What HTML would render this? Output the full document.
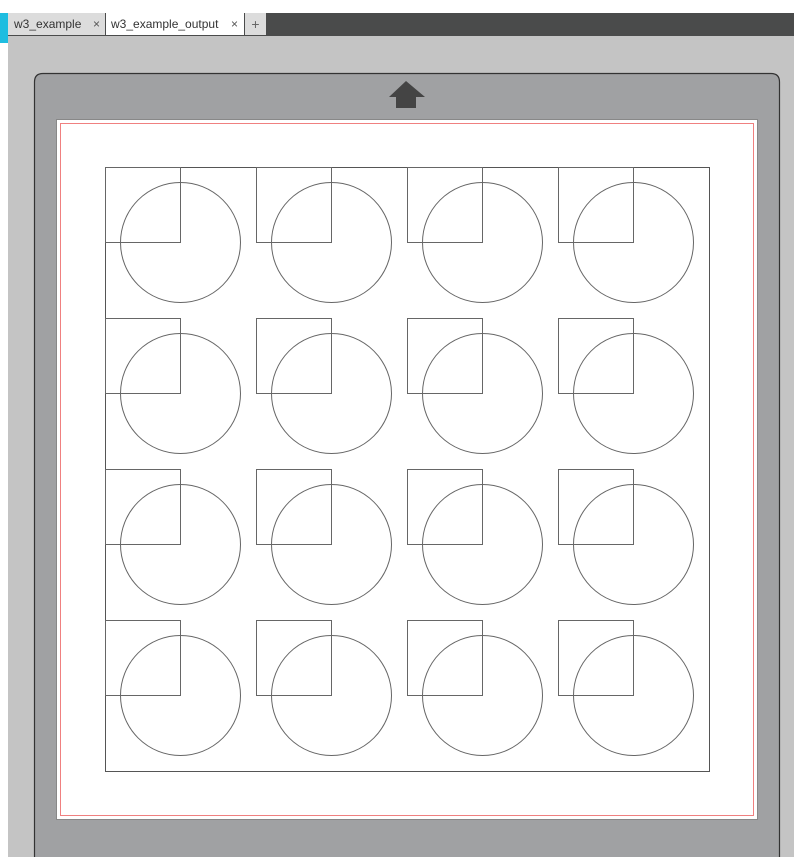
<!DOCTYPE html>
<html><head><style>
body{margin:0;width:794px;height:857px;overflow:hidden;background:#c4c4c4;font-family:"Liberation Sans",sans-serif;position:relative}
</style></head><body>
<div style="position:absolute;left:0;top:0;width:794px;height:13px;background:#fff"></div>
<div style="position:absolute;left:0;top:13px;width:794px;height:23px;background:#4a4b4b"></div>
<div style="position:absolute;left:0;top:13px;width:8px;height:30px;background:#1ebde0"></div>
<div style="position:absolute;left:0;top:43px;width:8px;height:814px;background:#fff"></div>
<div style="position:absolute;left:8px;top:13px;width:97px;height:22px;background:#dcdcdc;font-size:12px;color:#333;line-height:22px"><span style="margin-left:6px">w3_example</span><span style="position:absolute;left:85px;color:#555">×</span></div>
<div style="position:absolute;left:106px;top:13px;width:138px;height:22px;background:#fff;font-size:12px;color:#333;line-height:22px"><span style="margin-left:5px">w3_example_output</span><span style="position:absolute;left:125px;color:#555">×</span></div>
<div style="position:absolute;left:245px;top:13px;width:21px;height:22px;background:#dcdcdc;font-size:14px;color:#666;line-height:22px;text-align:center">+</div>
<svg style="position:absolute;left:0;top:0" width="794" height="857">
<path d="M34.5 857 V82 Q34.5 73.5 43 73.5 H771 Q779.5 73.5 779.5 82 V857" fill="#a0a1a3" stroke="#333" stroke-width="1.2"/>
<path d="M406 81 L425 97 L416 97 L416 108 L396 108 L396 97 L389 97 Z" fill="#444"/>
<rect x="56.5" y="119.5" width="701" height="700" fill="#fff" stroke="#888"/>
<rect x="60.5" y="123.5" width="693" height="692" fill="none" stroke="#f08080"/>
<rect x="105.5" y="167.5" width="604" height="604" fill="none" stroke="#555"/>
<g fill="none" stroke="#666" stroke-width="1">
<g id="c"><rect x="105.5" y="167.5" width="75" height="75"/><circle cx="180.5" cy="242.5" r="60"/></g>
<use href="#c" x="151"/><use href="#c" x="302"/><use href="#c" x="453"/>
<use href="#c" y="151"/><use href="#c" x="151" y="151"/><use href="#c" x="302" y="151"/><use href="#c" x="453" y="151"/>
<use href="#c" y="302"/><use href="#c" x="151" y="302"/><use href="#c" x="302" y="302"/><use href="#c" x="453" y="302"/>
<use href="#c" y="453"/><use href="#c" x="151" y="453"/><use href="#c" x="302" y="453"/><use href="#c" x="453" y="453"/>
</g>
</svg>
</body></html>
